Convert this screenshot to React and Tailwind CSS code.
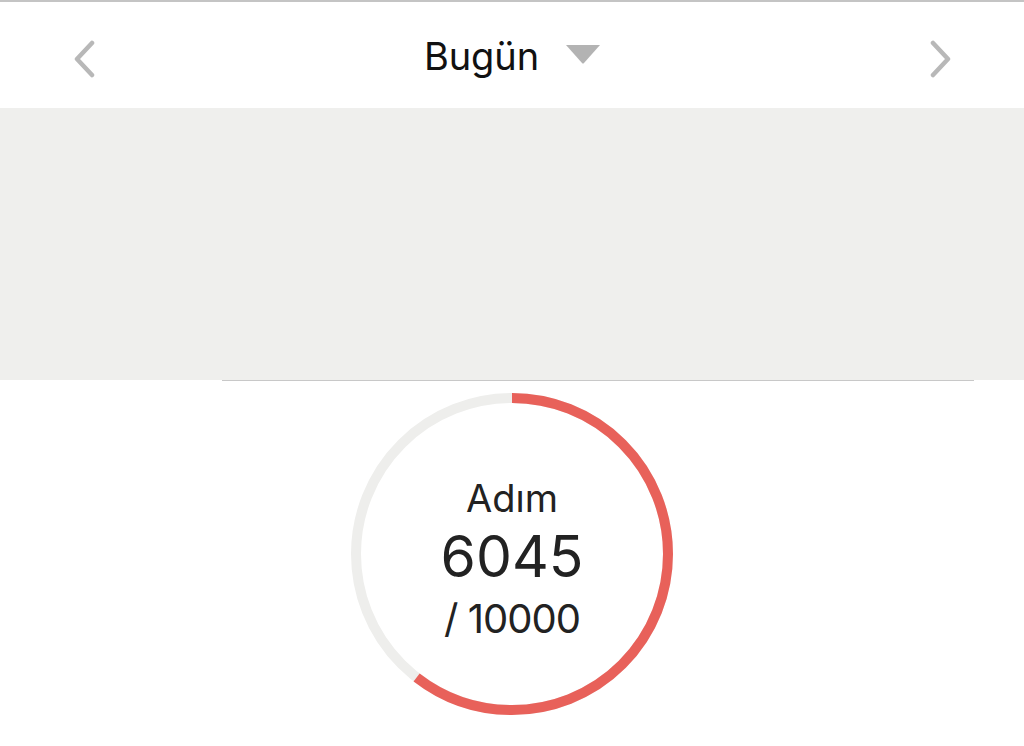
import React from "react";

export default function App() {
  const r = 156;
  const c = 2 * Math.PI * r;
  const pct = 6045 / 10000;
  return (
    <div className="w-[1024px] h-[746px] bg-white overflow-hidden" style={{ fontFamily: "Inter, 'Liberation Sans', sans-serif" }}>
      <div className="h-[2px] bg-[#c4c4c4]" />
      <div className="h-[106px] flex items-center justify-between pl-[73px] pr-[72px]">
        <svg width="22" height="38" viewBox="0 0 22 38" className="mt-[8px]">
          <path d="M19 3 L4 19 L19 35" fill="none" stroke="#b8b8b8" strokeWidth="4.5" strokeLinecap="round" strokeLinejoin="round" />
        </svg>
        <div className="flex items-center gap-[26px]">
          <span className="text-[38px] leading-[38px] text-[#111] mt-[2px] tracking-[-0.1px]">Bugün</span>
          <svg width="36" height="20" viewBox="0 0 36 20" className="mb-[3px]">
            <path d="M1 1 L35 1 L19 19 Q18 20 17 19 Z" fill="#b3b3b3" />
          </svg>
        </div>
        <svg width="22" height="38" viewBox="0 0 22 38" className="mt-[8px]">
          <path d="M3 3 L18 19 L3 35" fill="none" stroke="#b8b8b8" strokeWidth="4.5" strokeLinecap="round" strokeLinejoin="round" />
        </svg>
      </div>
      <div className="h-[272px] bg-[#efefed]" />
      <div className="flex">
        <div className="w-[222px]" />
        <div className="w-[752px] h-px bg-[#c8c8c8]" />
      </div>
      <div className="flex justify-center pt-[11px]">
        <div className="relative w-[324px] h-[324px]">
          <svg width="324" height="324" viewBox="0 0 324 324">
            <circle cx="162" cy="162" r={r} fill="none" stroke="#eeeeec" strokeWidth="10" />
            <circle
              cx="162"
              cy="162"
              r={r}
              fill="none"
              stroke="#e8615a"
              strokeWidth="10"
              strokeDasharray={`${c * pct} ${c}`}
              transform="rotate(-90 162 162)"
            />
          </svg>
          <div className="absolute inset-0 flex flex-col items-center pt-[87px] text-[#222]">
            <span className="text-[38px] leading-[38px]">Adım</span>
            <span className="text-[57px] leading-[57px] mt-[11px] tracking-[0px]">6045</span>
            <span className="text-[40px] leading-[40px] mt-[14px] tracking-[-1px]">/ 10000</span>
          </div>
        </div>
      </div>
    </div>
  );
}
